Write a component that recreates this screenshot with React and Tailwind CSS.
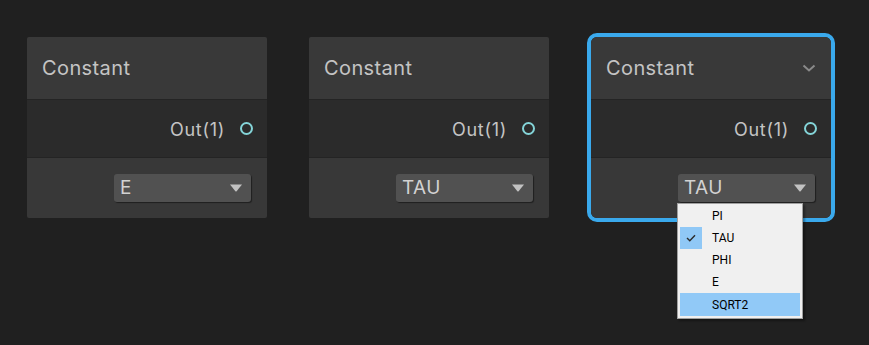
import React from 'react';

const options = ['PI', 'TAU', 'PHI', 'E', 'SQRT2'];

const Triangle = () => (
  <svg width="14" height="8" viewBox="0 0 14 8">
    <path d="M1 0.5 H13 L7.6 7.2 Q7 7.8 6.4 7.2 Z" fill="#c2c2c2" />
  </svg>
);

const Menu = () => (
  <div className="absolute left-[-1px] top-[29px] w-[126px] h-[116px] bg-[#f0f0f0] border border-[#a0a0a0] shadow-[2px_2px_2px_rgba(0,0,0,0.35)] pt-[1px] px-[2px] z-10 font-['Roboto',sans-serif] text-[12px] text-black tracking-normal">
    {options.map((opt) => (
      <div
        key={opt}
        className={`relative h-[22px] flex items-center pl-[32px] ${opt === 'SQRT2' ? 'bg-[#91c9f7] h-[23px]' : ''}`}
      >
        {opt === 'TAU' && (
          <div className="absolute left-0 top-0 w-[22px] h-[22px] bg-[#90c8f6] flex items-center justify-center">
            <svg width="10" height="8" viewBox="0 0 10 8">
              <path d="M1 4 L3.8 6.8 L9 1.2" fill="none" stroke="#2b2b2b" strokeWidth="1.4" />
            </svg>
          </div>
        )}
        {opt}
      </div>
    ))}
  </div>
);

const Dropdown = ({ value, open }) => (
  <div className="relative">
    <div className="w-[137px] h-[28px] rounded-[3px] bg-[#515151] shadow-[1px_1px_1px_rgba(0,0,0,0.45)] flex items-center justify-between pl-[6px] pr-[8px] text-[19px] text-[#d2d2d2]">
      <span>{value}</span>
      <Triangle />
    </div>
    {open && <Menu />}
  </div>
);

const Node = ({ value, selected }) => (
  <div
    className={`border-[4px] ${selected ? 'border-[#3aa9ec] rounded-[10px]' : 'border-transparent'}`}
  >
    <div className={`w-[240px] tracking-[0.4px] ${selected ? 'rounded-[6px]' : 'rounded-[2px]'}`}>
      <div
        className={`h-[63px] bg-[#393939] border-b border-[#242424] flex items-center justify-between pl-[15px] pr-[15px] text-[20px] text-[#c4c4c4] ${selected ? 'rounded-t-[6px]' : 'rounded-t-[2px]'}`}
      >
        <span>Constant</span>
        {selected && (
          <svg width="14" height="8" viewBox="0 0 14 8">
            <path d="M1.5 1.5 L7 6.5 L12.5 1.5" fill="none" stroke="#8a8a8a" strokeWidth="2" />
          </svg>
        )}
      </div>
      <div className="h-[58px] bg-[#2b2b2b] border-b border-[#242424] flex items-center justify-end gap-[15px] pr-[14px] text-[18px] tracking-[0.7px] text-[#c4c4c4]">
        <span className="pt-[2px]">Out(1)</span>
        <div className="w-[13px] h-[13px] rounded-full border-2 border-[#84d4d8]" />
      </div>
      <div
        className={`h-[60px] bg-[#383838] flex items-center justify-end pr-[16px] ${selected ? 'rounded-b-[6px]' : 'rounded-b-[2px]'}`}
      >
        <Dropdown value={value} open={selected} />
      </div>
    </div>
  </div>
);

export default function App() {
  return (
    <div className="w-[869px] h-[345px] bg-[#202020] overflow-hidden font-['Inter',sans-serif]">
      <div className="flex gap-[34px] pl-[23px] pt-[33px]">
        <Node value="E" />
        <Node value="TAU" />
        <Node value="TAU" selected />
      </div>
    </div>
  );
}
